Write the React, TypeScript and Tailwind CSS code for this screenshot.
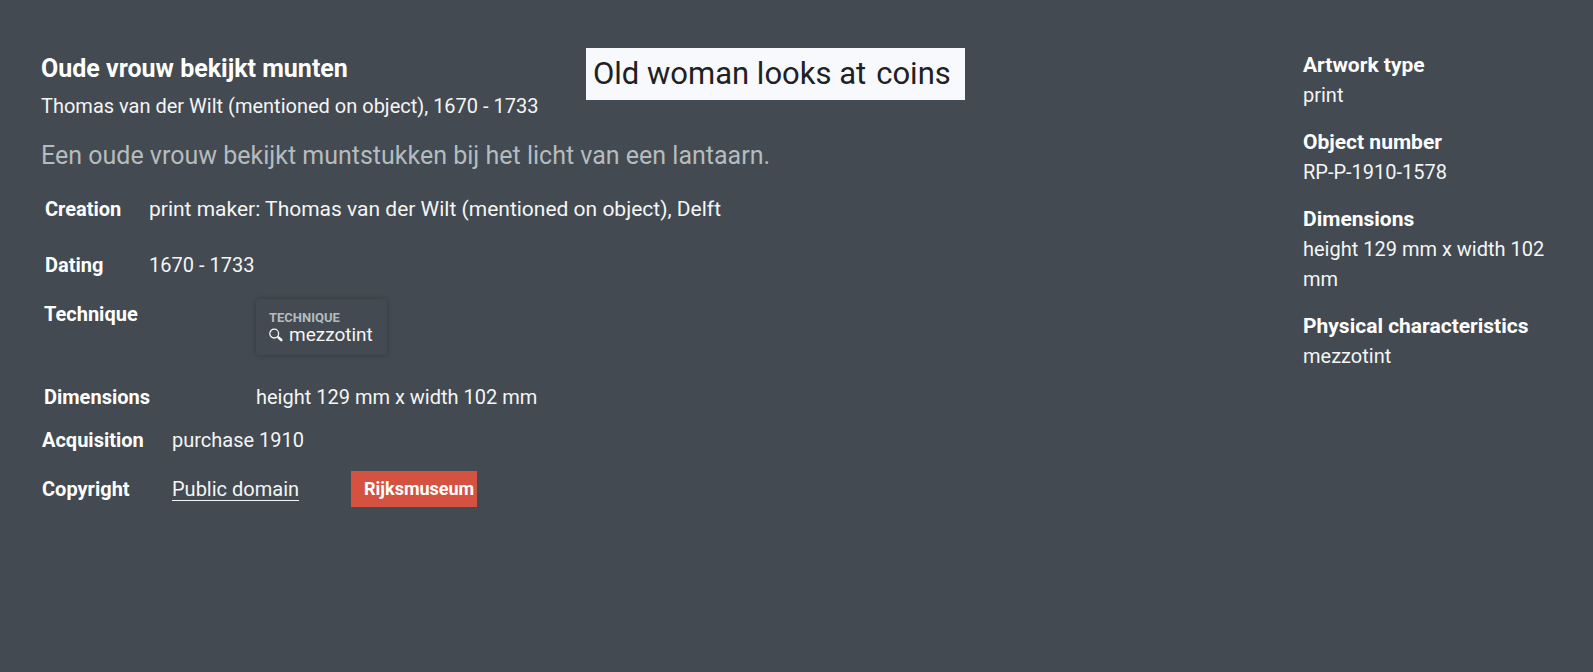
import type { ReactNode } from 'react';

const sidebarItems = [
  { label: 'Artwork type', value: 'print' },
  { label: 'Object number', value: 'RP-P-1910-1578' },
  { label: 'Dimensions', value: 'height 129 mm x width 102 mm' },
  { label: 'Physical characteristics', value: 'mezzotint' },
];

function Label({ children }: { children: ReactNode }) {
  return <dt className="font-bold text-white">{children}</dt>;
}

function SearchIcon() {
  return (
    <svg viewBox="0 0 14 14" className="h-3.5 w-3.5 shrink-0" fill="none" stroke="currentColor" aria-hidden="true">
      <circle cx="5.2" cy="5.6" r="4.4" strokeWidth="1.3" />
      <path d="M8.4 8.4 10 9.8" strokeWidth="1.6" />
      <path d="M9.8 9.8 12.3 12" strokeWidth="2.6" strokeLinecap="round" />
    </svg>
  );
}

export default function App() {
  return (
    <div className="flex min-h-screen items-start justify-between gap-10 bg-[#434a51] px-10 pt-12 pb-10 font-['Roboto',sans-serif] text-[20px] leading-[30px] text-[#f4f5f5]">
      <main className="min-w-0 flex-1">
        {/* Title and translation */}
        <header className="flex items-start gap-10">
          <div className="w-[506px] pl-px">
            <h1 className="text-[25px] leading-[42px] font-bold text-white">Oude vrouw bekijkt munten</h1>
            <p className="mt-px whitespace-nowrap">Thomas van der Wilt (mentioned on object), 1670 - 1733</p>
          </div>
          <p className="flex h-[52px] w-[379px] items-center gap-2.5 bg-[#f8f9fc] pl-[7px] text-[31px] whitespace-nowrap text-[#202124]">
            <span>Old woman looks at</span>
            <span>coins</span>
          </p>
        </header>

        <p className="mt-[15px] pl-px text-[25px] leading-10 text-[#b5bcbf]">
          Een oude vrouw bekijkt muntstukken bij het licht van een lantaarn.
        </p>

        {/* Object data */}
        <dl className="mt-[18px] grid grid-cols-[104px_1fr] gap-y-[26px] pl-[5px]">
          <Label>Creation</Label>
          <dd className="text-[21px]">print maker: Thomas van der Wilt (mentioned on object), Delft</dd>
          <Label>Dating</Label>
          <dd>1670 - 1733</dd>
        </dl>

        <dl className="mt-[19px] grid grid-cols-[212px_1fr] gap-y-[27px] pl-1">
          <Label>Technique</Label>
          <dd>
            <a
              href="#mezzotint"
              className="inline-block h-14 w-[131px] rounded-sm px-[13px] pt-[11px] align-top shadow-[0_0_5px_rgba(0,0,0,0.25)]"
            >
              <span className="block text-[13px] leading-4 font-bold text-[#b5bcbf]">TECHNIQUE</span>
              <span className="flex items-center gap-1.5 text-[19px] leading-[18px]">
                <SearchIcon />
                mezzotint
              </span>
            </a>
          </dd>
          <Label>Dimensions</Label>
          <dd>height 129 mm x width 102 mm</dd>
        </dl>

        <dl className="mt-[13px] grid grid-cols-[130px_1fr] items-center gap-y-4 pl-0.5">
          <Label>Acquisition</Label>
          <dd>purchase 1910</dd>
          <Label>Copyright</Label>
          <dd className="flex items-center gap-[52px]">
            <a href="#public-domain" className="underline decoration-1 underline-offset-4">
              Public domain
            </a>
            <a href="#rijksmuseum" className="bg-[#d65240] py-1 pr-[3px] pl-[13px] text-[18px] leading-7 font-bold text-white">
              Rijksmuseum
            </a>
          </dd>
        </dl>
      </main>

      {/* Summary */}
      <aside className="w-[250px] shrink-0 pt-0.5">
        <dl className="flex flex-col gap-[17px]">
          {sidebarItems.map((item) => (
            <div key={item.label}>
              <dt className="text-[21px] font-bold text-white">{item.label}</dt>
              <dd>{item.value}</dd>
            </div>
          ))}
        </dl>
      </aside>
    </div>
  );
}
